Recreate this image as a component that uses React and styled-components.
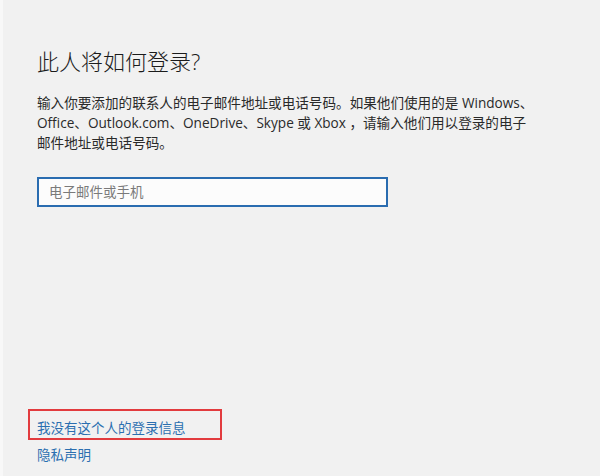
import React from 'react';
import styled, { createGlobalStyle } from 'styled-components';

const GlobalStyle = createGlobalStyle`
  html, body {
    margin: 0;
    padding: 0;
    background: #f1f1f1;
  }
  * {
    box-sizing: border-box;
  }
`;

const Page = styled.div`
  display: flex;
  flex-direction: column;
  height: 476px;
  padding: 0 0 11px 34px;
  border-left: 3px solid #f8f8f8;
  background: #f1f1f1;
  font-family: "Open Sans", "Noto Sans CJK SC", sans-serif;
`;

const Title = styled.h1`
  margin: 46px 0 0 0;
  font-size: 22px;
  line-height: 30px;
  font-weight: 300;
  color: #1b1b1b;
`;

const Description = styled.p`
  margin: 17px 0 0 0;
  width: 520px;
  font-size: 13.6px;
  line-height: 20px;
  color: #2a2a2a;
`;

const EmailInput = styled.input`
  margin-top: 24px;
  width: 351px;
  height: 30px;
  padding: 0 10px;
  border: 2px solid #2a6cb0;
  background: #fcfcfc;
  font-family: "Open Sans", "Noto Sans CJK SC", sans-serif;
  font-size: 13.5px;
  color: #222;
  outline: none;

  &::placeholder {
    color: #7a7a7a;
  }
`;

const Spacer = styled.div`
  flex: 1;
`;

const Highlight = styled.div`
  align-self: flex-start;
  width: 194px;
  margin-left: -9px;
  padding: 7px 0 0 7px;
  border: 2px solid #e23b3e;
`;

const TextLink = styled.a`
  display: block;
  margin-top: ${p => p.$gap || 0}px;
  font-size: 13.5px;
  line-height: 20px;
  color: #2b6fb0;
  text-decoration: none;
  cursor: pointer;
`;

function App() {
  return (
    <>
      <GlobalStyle />
      <Page>
        <Title>此人将如何登录?</Title>
        <Description>
          输入你要添加的联系人的电子邮件地址或电话号码。如果他们使用的是 Windows、<br />
          Office、Outlook.com、OneDrive、Skype 或 Xbox ，请输入他们用以登录的电子<br />
          邮件地址或电话号码。
        </Description>
        <EmailInput placeholder="电子邮件或手机" />
        <Spacer />
        <Highlight>
          <TextLink>我没有这个人的登录信息</TextLink>
        </Highlight>
        <TextLink $gap={5}>隐私声明</TextLink>
      </Page>
    </>
  );
}

export default App;
